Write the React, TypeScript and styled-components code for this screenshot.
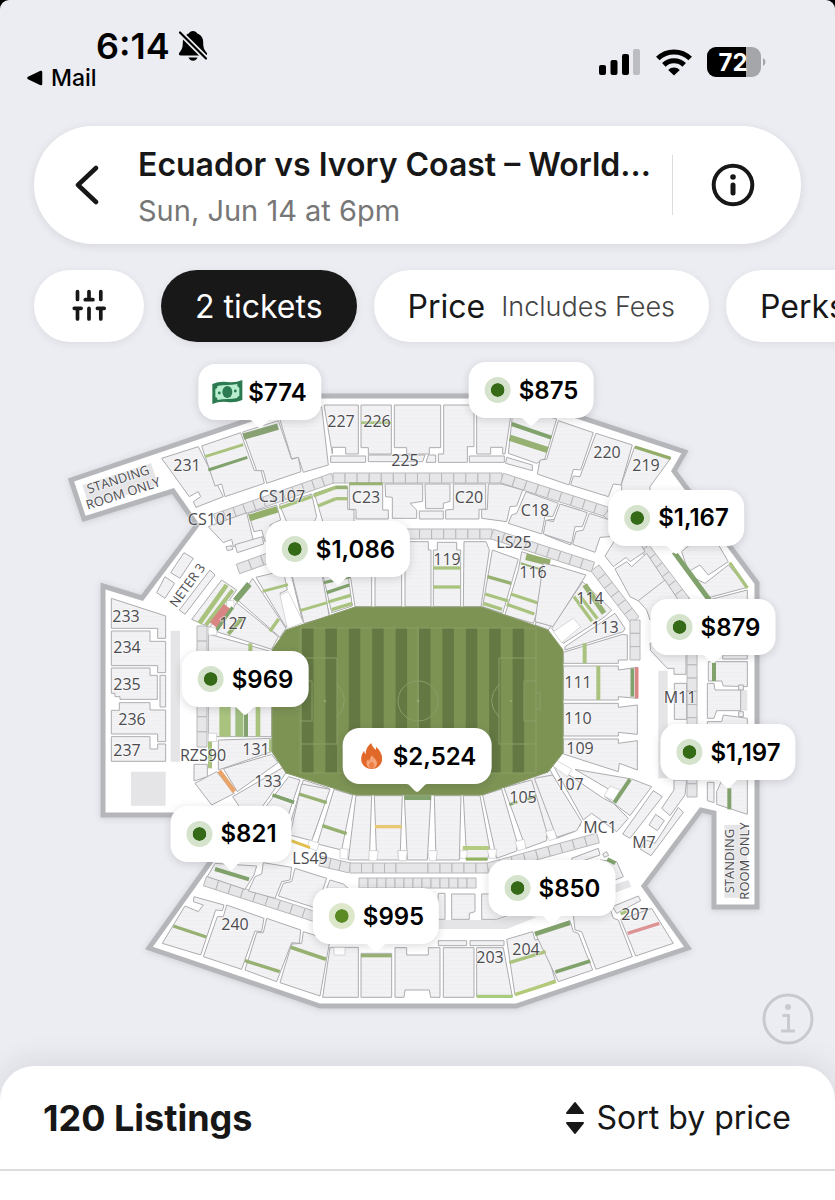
import React from 'react';
import styled, { createGlobalStyle } from 'styled-components';

const GlobalStyle = createGlobalStyle`
  *, *::before, *::after { box-sizing: border-box; }
  body {
    margin: 0;
    background: #000;
    font-family: Inter, "Liberation Sans", sans-serif;
    color: #171717;
  }
  button { font: inherit; color: inherit; border: 0; padding: 0; cursor: pointer; }
`;

const Screen = styled.main`
  display: flex;
  flex-direction: column;
  min-height: 100vh;
  overflow: hidden;
  background: #ecedf2;
  border-radius: 9px 9px 0 0;
`;

const StatusBar = styled.header`
  display: flex;
  justify-content: space-between;
  height: 126px;
  padding: 28px 69px 0 27px;
  color: #000;
`;

const Clock = styled.div`
  display: flex;
  align-items: center;
  gap: 8px;
  padding-left: 69px;
  font-size: 36px;
  line-height: 36px;
  font-weight: 600;
`;

const BackToApp = styled.a`
  display: flex;
  align-items: center;
  gap: 8px;
  color: inherit;
  text-decoration: none;
  font-size: 23px;
  line-height: 28px;
  font-weight: 500;
`;

const StatusIcons = styled.div`
  display: flex;
  align-items: center;
  gap: 15px;
  height: 30px;
  margin-top: 19px;
`;

const EventCard = styled.section`
  display: flex;
  align-items: center;
  height: 118px;
  margin: 0 34px;
  padding-right: 8px;
  border-radius: 59px;
  background: #fff;
  box-shadow: 0 2px 10px rgba(30, 32, 45, 0.1);
`;

const IconButton = styled.button<{ $width: number }>`
  display: flex;
  flex: none;
  align-items: center;
  justify-content: center;
  width: ${(p) => p.$width}px;
  height: 100%;
  background: none;
`;

const EventText = styled.div`
  flex: 1;
  min-width: 0;
  padding-top: 8px;
`;

const EventTitle = styled.h1`
  margin: 0;
  overflow: hidden;
  white-space: nowrap;
  font-size: 32px;
  line-height: 44px;
  font-weight: 600;
`;

const EventDate = styled.p`
  margin: 0;
  font-size: 29px;
  line-height: 48px;
  color: #777;
`;

const Divider = styled.span`
  width: 1px;
  height: 60px;
  background: #dcdcde;
`;

const Filters = styled.nav`
  display: flex;
  gap: 17px;
  margin-top: 26px;
  padding-left: 34px;
  overflow-x: clip;
`;

const Chip = styled.button<{ $active?: boolean }>`
  display: flex;
  flex: none;
  align-items: center;
  gap: 16px;
  height: 72px;
  padding: 0 34px;
  border-radius: 36px;
  font-size: 32px;
  white-space: nowrap;
  background: ${(p) => (p.$active ? '#181818' : '#fff')};
  color: ${(p) => (p.$active ? '#fff' : '#171717')};
  box-shadow: 0 2px 8px rgba(30, 32, 45, 0.08);
`;

const ChipNote = styled.span`
  font-size: 27px;
  font-weight: 300;
  color: #444;
`;

const MapArea = styled.section`
  position: relative;
`;

const MapDrawing = styled.svg`
  display: block;
  width: 100%;
  height: auto;
`;

const MapLabel = styled.text<{ $small?: boolean }>`
  font-family: "Open Sans", "Noto Sans", sans-serif;
  font-size: ${(p) => (p.$small ? 13 : 16)}px;
  fill: #4c4c50;
  text-anchor: middle;
  dominant-baseline: central;
  paint-order: stroke;
  stroke: rgba(255, 255, 255, 0.5);
  stroke-width: 2px;
`;

const Pin = styled.button`
  position: absolute;
  display: flex;
  align-items: center;
  gap: 8px;
  height: 56px;
  padding: 0 15px 0 16px;
  transform: translateX(-50%);
  border-radius: 17px;
  background: #fff;
  color: #000;
  font-size: 24px;
  font-weight: 600;
  white-space: nowrap;
  box-shadow: 0 2px 8px rgba(30, 32, 45, 0.16);

  &::after {
    content: '';
    position: absolute;
    left: 50%;
    top: 100%;
    width: 28px;
    height: 9px;
    margin-left: -14px;
    margin-top: -1px;
    background: #fff;
    clip-path: polygon(0 0, 100% 0, 80% 18%, 57% 90%, 50% 100%, 43% 90%, 20% 18%);
  }
`;

const PinIcon = styled.span`
  display: flex;
  justify-content: center;
  width: 26px;
  svg { flex: none; }
`;

const DealDot = styled.span<{ $light?: boolean }>`
  width: 26px;
  height: 26px;
  border: 6px solid ${(p) => (p.$light ? '#dde8cb' : '#d5e3cd')};
  border-radius: 50%;
  background: ${(p) => (p.$light ? '#5b8a24' : '#356a17')};
  background-clip: padding-box;
`;

const MapInfo = styled.button`
  position: absolute;
  right: 21px;
  bottom: 21px;
  width: 52px;
  height: 52px;
  background: none;
  svg { display: block; }
`;

const Sheet = styled.section`
  flex: 1;
  border-radius: 34px 34px 0 0;
  background: #fff;
  box-shadow: 0 -4px 30px rgba(30, 32, 45, 0.1);
  z-index: 1;
`;

const SheetHeader = styled.div`
  display: flex;
  align-items: center;
  justify-content: space-between;
  height: 105px;
  padding: 0 44px 0 43px;
  border-bottom: 2px solid #dcdddf;
`;

const ListingCount = styled.h2`
  margin: 0;
  font-size: 36px;
  font-weight: 700;
`;

const SortButton = styled.button`
  display: flex;
  align-items: center;
  gap: 11px;
  background: none;
  font-size: 32px;
`;

type Line = [x1: number, y1: number, x2: number, y2: number, width: number, color: string];

interface AreaData {
  x: number;
  y: number;
  seats: string[];
  gaps?: string[];
  fills?: string[];
  bars: Line[];
}

const G = '#a9c37f';
const M = '#97b173';
const D = '#82a26d';
const R = '#d98584';

/* Seat blocks are plotted at three units to a map pixel, from each area's own corner. */
const AREAS: AreaData[] = [
  {
    x: 50, y: 350,
    fills: ['97,405 303,340 325,405 118,470'],
    seats: [
      '335,325 445,290 520,440 438,472 430,455 452,440 445,425 418,440',
      '455,288 572,248 613,362 633,360 643,400 525,440 515,402 495,408',
      '578,246 685,212 725,328 745,322 753,365 650,400 640,362 620,362',
      '690,210 815,170 835,345 760,367 745,322 725,326',
      '475,530 590,488 610,572 550,590 545,568 520,578',
      '528,590 545,587 549,598 532,602',
      '555,584 637,560 641,582 562,608',
      '595,490 680,465 692,510 660,525 668,560 645,575 635,540 612,545',
      '688,463 785,432 800,500 790,520 712,520',
      '793,430 850,412 893,412 893,478 912,480 912,520 820,520',
      '402,608 430,625 390,685 362,668',
      '345,680 374,700 345,745 320,728',
    ],
    bars: [
      [580, 260, 684, 230, 19, '#88a173'],
      [465, 320, 580, 284, 9, G],
      [475, 360, 592, 322, 9, D],
      [598, 504, 682, 478, 20, '#93ae69'],
      [688, 474, 785, 440, 10, G],
      [790, 437, 858, 412, 11, G],
      [856, 412, 893, 412, 11, M],
      [804, 468, 858, 446, 10, G],
      [858, 446, 893, 446, 10, G],
    ],
  },
  {
    x: 300, y: 350,
    seats: [
      '72,165 175,165 175,312 137,312 137,292 97,292 97,312',
      '183,165 274,165 274,312 205,312 205,293 183,293',
      '283,165 422,165 422,293 388,293 388,312 320,312 320,293 283,293',
      '431,165 522,165 522,290 502,290 502,337 415,337 415,312 431,312',
      '530,165 637,165 615,312 608,312 608,292 572,292 572,312 530,312',
      '92,318 197,318 197,337 92,337',
      '205,315 375,315 368,335 205,335',
      '385,315 407,315 407,337 378,337',
      '508,318 613,318 613,337 508,337',
      '640,170 770,207 735,325 710,340 625,310',
      '620,322 697,345 697,362 617,340',
      '148,402 248,402 248,480 265,480 265,507 168,507 168,478 148,478',
      '255,402 368,402 368,454 330,460 350,480 350,505 277,505 277,442 257,440',
      '375,402 450,402 450,454 430,460 430,476 377,476',
      '358,483 430,483 430,507 358,507',
      '460,402 557,402 557,478 537,478 537,507 437,507 437,480 460,478',
      '565,402 605,402 668,420 650,468 630,470 620,515 545,505 545,478 562,478',
      '678,425 775,460 758,500 735,498 725,552 625,520 635,495 650,490',
      '785,465 838,480 820,530 812,585 735,555 742,510 765,508',
      '225,575 305,575 305,770 225,770',
      '315,575 385,575 385,600 393,600 393,770 315,770',
      '412,577 470,577 470,600 482,600 482,770 400,770 400,600 412,600',
      '492,575 558,575 568,600 543,770 490,770',
      '577,600 655,628 608,790 548,770',
      '665,605 745,632 750,668 700,820 615,795 655,660',
      '757,645 840,675 840,700 745,840 706,825',
      '150,670 215,670 215,770 165,770',
      '70,680 145,680 157,768 95,788',
      '-25,680 60,680 88,792 8,815',
    ],
    bars: [
      [183, 218, 274, 218, 8, G],
      [635, 222, 754, 263, 12, D],
      [629, 263, 743, 300, 19, M],
      [148, 401, 248, 401, 9, M],
      [400, 654, 482, 654, 10, G],
      [400, 711, 482, 711, 10, G],
      [562, 680, 633, 700, 10, M],
      [555, 732, 625, 753, 10, G],
      [550, 760, 606, 778, 10, G],
      [632, 732, 714, 759, 10, G],
      [620, 763, 703, 792, 10, G],
      [678, 620, 750, 638, 20, '#94ad6b'],
      [662, 640, 745, 665, 6, M],
      [70, 698, 150, 680, 9, D],
      [80, 728, 148, 705, 10, D],
      [0, 778, 78, 756, 9, G],
      [84, 756, 152, 736, 10, G],
      [95, 779, 157, 760, 10, G],
    ],
  },
  {
    x: 550, y: 350,
    seats: [
      '25,212 130,248 92,360 70,358 57,405 -38,372 -30,330 -10,328',
      '138,250 247,285 213,405 190,402 175,440 62,405 70,378 90,380',
      '254,290 362,325 300,410 300,430 215,430 215,400',
      '30,462 112,488 97,530 75,530 65,580 -20,552 -12,510 10,515',
      '118,490 180,510 180,560 150,562 135,607 68,583 78,545 100,540',
      '165,618 195,570 265,570 285,605 240,635 228,622 190,650',
      '195,657 230,635 245,650 290,610 350,700 270,755 240,740',
      '395,605 430,575 500,575 535,635 475,675 450,645 415,665',
      '425,680 465,700 535,645 592,712 480,742',
      '-20,640 25,650 108,675 10,830 -45,815',
    ],
    bars: [
      [255, 291, 362, 325, 10, '#93ad68'],
      [372, 606, 478, 750, 15, D],
      [539, 638, 592, 714, 10, G],
    ],
  },
  {
    x: 50, y: 580,
    fills: ['362,152 390,152 390,545 362,545', '243,575 347,575 347,677 243,677'],
    seats: [
      '184,55 347,108 347,175 323,175 323,145 184,145',
      '184,153 300,153 300,184 347,184 347,278 323,278 323,257 184,257',
      '184,264 300,264 300,286 322,286 322,358 210,358 210,350 195,350 195,340 184,340',
      '330,286 347,286 347,381 330,381',
      '208,368 300,368 300,390 347,390 347,485 323,485 323,462 184,462 184,391 208,391',
      '184,470 300,470 300,507 323,507 323,492 347,492 347,544 184,544',
      '480,-30 495,-15 405,103 388,90',
      '425,118 515,0 560,30 480,142',
      '500,155 560,68 685,170 665,208',
      '565,62 608,-5 708,145 690,172',
      '618,-8 700,-28 712,30 690,40 715,130 708,142',
      '722,-30 810,-50 838,110 762,130',
      '475,162 665,215 665,470 475,470',
      '505,480 665,475 665,515 505,570',
      '520,566 665,523 684,548 562,635',
      '435,610 500,575 553,640 485,675',
      '432,553 472,553 472,590 432,603',
      '548,650 700,562 710,576 630,690 575,690',
      '640,690 716,590 750,600 700,750',
      '760,600 838,625 790,770 718,740',
    ],
    gaps: ['690,45 715,35 760,128 712,145', '475,142 500,142 500,165 475,165', '530,62 552,62 552,85 530,85', '475,460 500,460 500,485 475,485'],
    bars: [
      [448, 130, 530, 15, 14, G],
      [468, 135, 548, 30, 12, G],
      [490, 135, 532, 80, 26, R],
      [500, 150, 548, 82, 10, D],
      [535, 162, 575, 115, 12, M],
      [556, 62, 598, 12, 18, D],
      [638, 34, 714, 14, 9, G],
      [660, 154, 686, 117, 10, G],
      [750, 92, 832, 68, 9, G],
      [601, 190, 601, 215, 12, G],
      [525, 380, 525, 470, 34, G],
      [568, 380, 568, 470, 24, '#a0bd80'],
      [588, 400, 588, 470, 12, D],
      [624, 380, 624, 470, 14, G],
      [480, 485, 480, 565, 12, G],
      [661, 478, 661, 515, 8, G],
      [508, 573, 553, 635, 14, '#e9a46c'],
      [668, 645, 732, 667, 10, D],
      [749, 642, 830, 667, 10, M],
    ],
  },
  {
    x: 550, y: 580,
    fills: ['325,272 353,272 353,595 325,595', '523,735 592,735 592,953 523,953', '570,330 592,330 592,392 570,392'],
    seats: [
      '5,145 98,5 185,90 165,110 40,190',
      '45,200 195,100 225,145 220,155 45,210',
      '40,217 218,163 232,165 232,240 205,240 205,250 40,250',
      '40,258 205,258 205,270 262,262 262,355 205,350 205,360 40,360',
      '40,370 205,370 205,382 262,375 262,463 205,457 205,468 40,468',
      '40,477 205,477 205,490 262,482 262,570 208,550 205,575 40,522',
      '75,568 245,597 305,620 240,707 165,650 180,630',
      '12,560 65,590 160,655 190,670 235,715 200,755 125,700 100,720',
      '-80,600 0,570 92,735 72,755 20,775 -20,770',
      '310,632 337,650 240,775 218,762',
      '317,703 343,722 322,752 297,735',
      '385,682 400,697 303,827 270,807 290,780 315,790',
      '265,62 345,0 385,60 300,120 290,90',
      '300,190 408,190 408,283 372,283 372,265 352,265 302,212',
      '373,310 410,310 410,418 373,418',
      '372,600 410,600 405,645 360,707 335,685 372,630',
      '475,60 592,30 592,90 475,90',
      '518,225 592,225 592,237 518,237',
      '475,245 592,245 592,320 520,318 515,303 475,303',
      '472,310 492,310 495,330 572,330 572,392 500,392 492,415 472,415',
      '566,315 580,315 580,330 566,330',
      '566,395 580,395 580,410 566,410',
      '472,425 515,425 520,405 592,415 592,445 472,445',
      '472,607 492,607 492,668 472,662',
      '500,635 520,590 592,590 592,703 500,673',
    ],
    gaps: ['10,155 70,115 92,140 35,188', '5,555 18,540 66,568 52,590', '180,618 210,630 192,662 162,648'],
    bars: [
      [72, 50, 126, 124, 10, G],
      [90, 48, 142, 116, 10, G],
      [104, 14, 162, 100, 16, M],
      [104, 190, 104, 250, 12, G],
      [145, 258, 145, 360, 12, G],
      [247, 265, 247, 350, 11, D],
      [260, 262, 260, 355, 11, R],
      [193, 668, 240, 598, 12, D],
      [492, 248, 492, 303, 12, D],
      [538, 625, 538, 688, 12, D],
    ],
  },
  {
    x: 130, y: 780,
    seats: [
      '515,12 600,28 545,182 480,165',
      '612,28 668,45 635,210 562,192',
      '678,47 725,47 718,240 655,240',
      '733,47 817,47 810,240 740,240',
      '255,250 380,258 372,285 345,328 232,290',
      '400,248 485,262 480,300 455,305 435,355 355,333 375,290 395,282',
      '495,265 590,295 560,385 445,348 460,310 485,305',
      '600,300 640,312 655,325 590,325',
      '192,350 282,375 277,392 257,390 212,525 97,490 165,378 205,395 220,375 190,365',
      '290,375 402,415 395,455 375,453 335,568 220,530 262,410 280,410',
      '410,415 512,450 508,490 485,488 440,605 345,570 380,458 400,458',
      '520,455 600,480 590,535 570,648 450,608 485,492 515,490',
      '600,502 685,502 685,652 578,652',
      '693,520 785,520 785,652 693,652',
    ],
    gaps: ['538,180 568,190 560,212 532,202', '630,205 655,208 652,238 630,235', '717,212 745,212 740,242 717,242', '803,212 833,212 829,242 806,242', '612,502 645,502 645,525 612,525'],
    bars: [
      [428, 45, 492, 67, 10, D],
      [507, 42, 590, 68, 10, M],
      [577, 137, 650, 161, 10, M],
      [483, 182, 540, 203, 9, '#e3c04e'],
      [735, 140, 815, 140, 10, '#e8c873'],
      [255, 267, 357, 298, 12, D],
      [130, 438, 229, 471, 10, M],
      [345, 542, 449, 575, 10, M],
      [482, 502, 588, 538, 11, M],
      [693, 527, 785, 527, 10, M],
    ],
  },
  {
    x: 400, y: 780,
    fills: ['0,420 290,420 360,400 410,412 320,447 0,447', '640,315 685,300 694,320 640,340'],
    seats: [
      '13,47 93,47 82,240 22,240',
      '103,47 183,47 178,240 108,240',
      '190,47 240,47 270,210 262,240 200,240',
      '248,45 305,27 352,190 350,213 290,235',
      '312,23 395,0 440,155 440,182 378,205',
      '403,-5 458,-15 545,125 530,152 470,172',
      '115,340 135,340 135,418 110,418',
      '155,342 225,342 225,395 208,400 208,418 155,418',
      '245,342 270,342 290,400 330,405 290,418 245,418',
      '515,235 595,205 600,225 520,252',
      '608,222 620,215 626,226 613,232',
      '600,240 650,245 670,290 640,302',
      '-15,503 20,503 20,525 85,525 85,503 120,503 120,652 92,652 88,630 15,630 12,652 -15,652',
      '130,503 222,503 222,652 130,652',
      '230,503 310,503 337,650 230,650',
      '115,482 200,482 200,497 115,497',
      '210,482 312,482 312,497 210,497',
      '320,478 398,455 405,480 430,475 465,600 345,645',
      '405,458 510,422 520,455 535,460 578,570 475,605',
      '520,405 630,385 640,415 655,420 697,530 588,568 545,455 525,450',
      '662,418 755,385 820,490 707,528',
      '637,380 715,348 722,362 650,400',
    ],
    gaps: ['-7,212 22,212 18,242 -3,242', '84,212 112,212 108,242 88,242', '180,212 202,212 200,235 180,235', '262,208 290,208 286,235 268,235', '345,185 372,178 378,205 355,213', '436,155 462,148 470,175 448,182'],
    bars: [
      [13, 53, 93, 53, 14, D],
      [188, 204, 267, 204, 12, '#b5cb82'],
      [197, 237, 262, 237, 9, '#93b25e'],
      [328, 74, 352, 65, 8, D],
      [380, 58, 408, 48, 8, D],
      [405, 462, 510, 428, 14, D],
      [466, 576, 571, 543, 11, D],
      [328, 548, 437, 515, 10, G],
      [345, 644, 468, 604, 10, '#b3cb78'],
      [230, 649, 338, 649, 10, '#a9cb80'],
      [683, 460, 778, 430, 10, '#dd9294'],
      [622, 238, 646, 250, 12, D],
      [662, 402, 680, 394, 10, G],
    ],
  },
];

/* Boxes and suites: a run of equal cells along a line. */
const CELL_RUNS: [number, number, number, number, number][] = [
  [215, 519, 333, 478, 12],
  [333, 478, 502, 478, 14],
  [502, 478, 607, 512, 9],
  [607, 512, 645, 548, 4],
  [645, 548, 692, 610, 7],
  [692, 612, 692, 797, 14],
  [238, 569, 335, 534, 8],
  [335, 534, 492, 534, 13],
  [492, 534, 593, 567, 9],
  [595, 568, 635, 620, 6],
  [635, 620, 635, 660, 3],
  [202, 626, 202, 747, 8],
  [320, 861, 350, 868, 3],
  [350, 868, 396, 868, 4],
  [396, 868, 428, 868, 1],
  [428, 868, 488, 868, 5],
  [488, 868, 598, 838, 9],
  [359, 883, 476, 883, 13],
  [205, 881, 316, 917, 9],
];

const cellRunPoints = (x1: number, y1: number, x2: number, y2: number, count: number) => {
  const length = Math.hypot(x2 - x1, y2 - y1);
  const nx = (-(y2 - y1) / length) * 5;
  const ny = ((x2 - x1) / length) * 5;
  return Array.from({ length: count }, (_, i) => {
    const ax = x1 + ((x2 - x1) * i) / count;
    const ay = y1 + ((y2 - y1) * i) / count;
    const bx = x1 + ((x2 - x1) * (i + 1)) / count;
    const by = y1 + ((y2 - y1) * (i + 1)) / count;
    return `${ax + nx},${ay + ny} ${bx + nx},${by + ny} ${bx - nx},${by - ny} ${ax - nx},${ay - ny}`;
  });
};

const LABELS: [string, number, number][] = [
  ['231', 187, 465], ['227', 341, 421], ['226', 377, 421], ['225', 405, 460], ['220', 607, 452],
  ['219', 646, 465], ['CS101', 211, 519], ['CS107', 282, 496], ['C23', 366, 497], ['C20', 469, 497],
  ['C18', 535, 510], ['LS25', 514, 542], ['119', 447, 559], ['116', 533, 572], ['114', 590, 598],
  ['113', 605, 627], ['111', 578, 682], ['110', 578, 718], ['109', 580, 748], ['107', 570, 784],
  ['105', 523, 797], ['MC1', 600, 827], ['M7', 644, 842], ['233', 126, 616], ['234', 127, 647],
  ['235', 127, 684], ['236', 132, 719], ['237', 127, 750], ['127', 233, 623], ['131', 256, 749],
  ['133', 268, 781], ['RZS90', 203, 755], ['LS49', 310, 858], ['240', 235, 924], ['203', 490, 957],
  ['204', 526, 949], ['207', 635, 914], ['M11', 680, 697],
];

const SMALL_LABELS: [string, number, number, number][] = [
  ['STANDING', 118, 479, -18],
  ['ROOM ONLY', 123, 493, -18],
  ['NETER 3', 187, 585, -54],
  ['STANDING', 729, 861, -90],
  ['ROOM ONLY', 744, 861, -90],
];

const OUTLINE =
  '71,480 320,396 516,396 685,452 674,471 757,583 757,907 714,907 714,813 701,810 644,886 688,948 516,1006 320,1006 149,948 244,815 103,815 103,586 142,598 197,525 173,491 84,519';

const FIELD =
  '355,607 482,607 548,630 563,650 563,753 548,772 482,795 355,795 286,773 272,752 272,650 286,630';

const StadiumMap = () => (
  <MapDrawing viewBox="0 342 835 724" role="img" aria-label="Stadium seating map">
    <defs>
      <pattern id="rows" width="12" height="12" patternUnits="userSpaceOnUse">
        <rect width="12" height="12" fill="#f2f2f4" />
        <rect width="12" height="3" fill="#efeff1" />
      </pattern>
      <filter id="lift" x="-10%" y="-10%" width="120%" height="120%">
        <feDropShadow dx="0" dy="1" stdDeviation="3" floodColor="#50525c" floodOpacity="0.2" />
      </filter>
    </defs>
    <polygon points={OUTLINE} fill="#fff" stroke="#b5b6ba" strokeWidth="5" filter="url(#lift)" />
    {CELL_RUNS.flatMap((run) =>
      cellRunPoints(...run).map((points) => (
        <polygon key={points} points={points} fill="#e6e6e8" stroke="#b8b8bb" strokeWidth="1" />
      )),
    )}
    {AREAS.map((area) => (
      <g key={`${area.x}-${area.y}`} transform={`translate(${area.x} ${area.y}) scale(0.33333)`}>
        {area.fills?.map((points) => <polygon key={points} points={points} fill="#e5e5e7" />)}
        {area.seats.map((points) => (
          <polygon key={points} points={points} fill="url(#rows)" stroke="#acacb0" strokeWidth="3" />
        ))}
        {area.gaps?.map((points) => (
          <polygon key={points} points={points} fill="#fff" stroke="#c6c6c9" strokeWidth="2" />
        ))}
        {area.bars.map(([x1, y1, x2, y2, width, color]) => (
          <line key={`${x1}-${y1}`} x1={x1} y1={y1} x2={x2} y2={y2} stroke={color} strokeWidth={width} />
        ))}
      </g>
    ))}
    <polygon points={FIELD} fill="#7d9354" stroke="#8b9c6c" strokeWidth="1" />
    {Array.from({ length: 10 }, (_, i) => (
      <rect key={i} x={302 + i * 23.4} y="628" width="11.5" height="145" fill="#647843" />
    ))}
    <g fill="none" stroke="#8b9e68" strokeWidth="1">
      <rect x="300" y="628" width="236" height="145" />
      <path d="M418 628V773M418 681a20 20 0 1 0 .1 0" />
      <path d="M300 658h37v86h-37M300 681h12v40h-12M300 693h-4v16h4M337 684q15 17 0 33" />
      <path d="M536 658h-37v86h37M536 681h-12v40h12M536 693h4v16h-4M499 684q-15 17 0 33" />
    </g>
    <g fill="#93a671">
      <circle cx="418" cy="701" r="1.5" />
      <circle cx="325" cy="701" r="1.2" />
      <circle cx="511" cy="701" r="1.2" />
    </g>
    {LABELS.map(([label, x, y]) => (
      <MapLabel key={label} x={x} y={y}>{label}</MapLabel>
    ))}
    {SMALL_LABELS.map(([label, x, y, angle]) => (
      <MapLabel $small key={`${label}${x}`} transform={`translate(${x} ${y}) rotate(${angle})`}>
        {label}
      </MapLabel>
    ))}
  </MapDrawing>
);

const CashIcon = () => (
  <svg width="32" height="26" viewBox="0 0 32 26" aria-hidden="true">
    <path d="M1 5q7-3 15-2t15-2v20q-7 3-15 2t-15 2z" fill="#2b7a50" />
    <path d="M6 7q5-1 10-1t10-1v2l2 2v8l-2 1v1q-5 1-10 1t-10 1v-2l-2-1v-8l2-1z" fill="#b8edcf" />
    <ellipse cx="16" cy="13" rx="5" ry="6" fill="#2b7a50" />
    <circle cx="8" cy="14" r="1.4" fill="#2b7a50" />
    <circle cx="24" cy="12" r="1.4" fill="#2b7a50" />
  </svg>
);

const FireIcon = () => (
  <svg width="22" height="26" viewBox="0 0 22 26" aria-hidden="true">
    <path d="M10.500 0c.8 3.200 2.500 4.600 4.300 7 .5-1 .6-2 .5-3.200C19 7 21.500 11 21.500 15.600 21.500 21.600 17 26 11 26S.5 21.600.5 16c0-3.400 1.200-6 3-8.200.2 1.500.6 2.500 1.400 3.400C5 6.500 7 2.500 10.500 0z" fill="#e0692a" />
    <path d="M11.500 12c.3 2.500 4.800 4.300 4.800 8.200 0 3-2.200 5-5.200 5s-5.300-2-5.300-5c0-1.800.8-3 1.800-4 .2 1 .7 1.600 1.400 1.900 0-2.300.8-4.300 2.500-6.100z" fill="#f4a67a" />
    <path d="M11 18.500c2 1.500 2.600 2.500 2.600 3.800a2.600 2.600 0 0 1-5.200 0c0-1.300.8-2.500 2.600-3.800z" fill="#ee7f45" />
  </svg>
);

type PinKind = 'deal' | 'light' | 'cash' | 'fire';

const PINS: { price: string; x: number; y: number; kind: PinKind }[] = [
  { price: '$774', x: 260, y: 364, kind: 'cash' },
  { price: '$875', x: 531, y: 362, kind: 'deal' },
  { price: '$1,167', x: 676, y: 490, kind: 'deal' },
  { price: '$1,086', x: 338, y: 521, kind: 'deal' },
  { price: '$879', x: 713, y: 599, kind: 'deal' },
  { price: '$969', x: 245, y: 651, kind: 'deal' },
  { price: '$2,524', x: 417, y: 728, kind: 'fire' },
  { price: '$1,197', x: 728, y: 724, kind: 'deal' },
  { price: '$821', x: 231, y: 806, kind: 'deal' },
  { price: '$850', x: 552, y: 860, kind: 'deal' },
  { price: '$995', x: 376, y: 888, kind: 'light' },
];

const pinIcon = (kind: PinKind) => {
  if (kind === 'cash') return <CashIcon />;
  if (kind === 'fire') return <FireIcon />;
  return <DealDot $light={kind === 'light'} />;
};

const BellOffIcon = () => (
  <svg width="30" height="32" viewBox="0 0 30 32" aria-hidden="true">
    <path d="M15 1c2 0 3.600 1 4.200 2.600 4 1.400 6 4.600 6 9 0 5.500 1 7.200 3.300 9.900 1.300 1.500.5 3-1.300 3H2.800c-1.800 0-2.600-1.500-1.300-3C3.800 19.800 4.800 18 4.800 12.600c0-4.400 2-7.600 6-9C11.400 2 13 1 15 1z" />
    <path d="M10.500 27.500h9c-.6 2-2.300 3.200-4.500 3.200s-3.900-1.200-4.500-3.200z" />
    <path d="M1 1.500l28 28" stroke="#ecedf2" strokeWidth="5.600" />
    <path d="M2 2.500l26 26" stroke="#000" strokeWidth="2.200" strokeLinecap="round" />
  </svg>
);

const SignalIcon = () => (
  <svg width="42" height="28" viewBox="0 0 42 28" aria-hidden="true">
    <rect x="0" y="17" width="7" height="10" rx="2" />
    <rect x="11.500" y="12" width="7" height="15" rx="2" />
    <rect x="23" y="6" width="7" height="21" rx="2" />
    <rect x="34" y="1" width="7" height="26" rx="2" fill="#bcbdc2" />
  </svg>
);

const WifiIcon = () => (
  <svg width="36" height="27" viewBox="0 0 36 27" aria-hidden="true">
    <g fill="none" stroke="#000" strokeWidth="5">
      <path d="M1.800 9.600a23 23 0 0 1 32.400 0" />
      <path d="M7.800 15.900a14.500 14.500 0 0 1 20.400 0" />
    </g>
    <path d="M18 26.500l-5.800-5.600a8.300 8.300 0 0 1 11.600 0z" />
  </svg>
);

const BatteryIcon = () => (
  <svg width="59" height="30" viewBox="0 0 59 30" role="img" aria-label="Battery 72%">
    <defs>
      <clipPath id="cell"><rect width="54" height="30" rx="9" /></clipPath>
    </defs>
    <g clipPath="url(#cell)">
      <rect width="54" height="30" fill="#a5a6a9" />
      <rect width="39" height="30" />
    </g>
    <path d="M56 11c3.200 1.500 3.200 6.500 0 8z" fill="#a5a6a9" />
    <text x="26" y="23.500" fill="#fff" fontSize="24" fontWeight="700" textAnchor="middle">72</text>
  </svg>
);

const App = () => (
  <>
    <GlobalStyle />
    <Screen>
      <StatusBar>
        <div>
          <Clock>
            6:14
            <BellOffIcon />
          </Clock>
          <BackToApp href="#mail">
            <svg width="16" height="16" viewBox="0 0 16 16" aria-hidden="true">
              <path d="M1.500 8L14 2v12z" stroke="#000" strokeWidth="2.500" strokeLinejoin="round" />
            </svg>
            Mail
          </BackToApp>
        </div>
        <StatusIcons>
          <SignalIcon />
          <WifiIcon />
          <BatteryIcon />
        </StatusIcons>
      </StatusBar>

      <EventCard>
        <IconButton $width={104} aria-label="Back">
          <svg width="26" height="42" viewBox="0 0 26 42" fill="none" aria-hidden="true">
            <path d="M23 4L5 21l18 17" stroke="#171717" strokeWidth="4.500" strokeLinecap="round" strokeLinejoin="round" />
          </svg>
        </IconButton>
        <EventText>
          <EventTitle>Ecuador vs Ivory Coast – World...</EventTitle>
          <EventDate>Sun, Jun 14 at 6pm</EventDate>
        </EventText>
        <Divider />
        <IconButton $width={120} aria-label="Event details">
          <svg width="44" height="44" viewBox="0 0 44 44" fill="none" aria-hidden="true">
            <circle cx="22" cy="22" r="19.300" stroke="#171717" strokeWidth="4" />
            <circle cx="22" cy="14" r="2.800" fill="#171717" />
            <path d="M22 22v8" stroke="#171717" strokeWidth="5" strokeLinecap="round" />
          </svg>
        </IconButton>
      </EventCard>

      <Filters aria-label="Filters">
        <Chip aria-label="All filters">
          <svg width="42" height="34" viewBox="0 0 42 34" fill="none" stroke="#171717" strokeWidth="3.700" strokeLinecap="round" aria-hidden="true">
            <path d="M9.500 2.500v8M21 2.500v8M32.800 2.500v8M17.300 10.700h7.600M6.300 19.300h6.800M9.500 19.500v10.500M21 19.300V30M29.400 19.300h6.800M32.800 19.500V30" />
          </svg>
        </Chip>
        <Chip $active>2 tickets</Chip>
        <Chip>
          Price
          <ChipNote>Includes Fees</ChipNote>
        </Chip>
        <Chip>Perks</Chip>
      </Filters>

      <MapArea>
        <StadiumMap />
        {PINS.map(({ price, x, y, kind }) => (
          <Pin key={price} style={{ left: `${(x / 835) * 100}%`, top: `${((y - 342) / 724) * 100}%` }}>
            <PinIcon>{pinIcon(kind)}</PinIcon>
            {price}
          </Pin>
        ))}
        <MapInfo aria-label="Map information">
          <svg width="52" height="52" viewBox="0 0 52 52" fill="none" stroke="#c9cacf" strokeWidth="3" aria-hidden="true">
            <circle cx="26" cy="26" r="24" />
            <path d="M20.500 22.500h6V38M19 38h14" />
            <circle cx="26" cy="14" r="1.500" fill="#c9cacf" />
          </svg>
        </MapInfo>
      </MapArea>

      <Sheet>
        <SheetHeader>
          <ListingCount>120 Listings</ListingCount>
          <SortButton>
            <svg width="20" height="34" viewBox="0 0 20 34" fill="#171717" aria-hidden="true">
              <path d="M10 2l8 10H2zM10 32L2 22h16z" stroke="#171717" strokeWidth="2" strokeLinejoin="round" />
            </svg>
            Sort by price
          </SortButton>
        </SheetHeader>
      </Sheet>
    </Screen>
  </>
);

export default App;
